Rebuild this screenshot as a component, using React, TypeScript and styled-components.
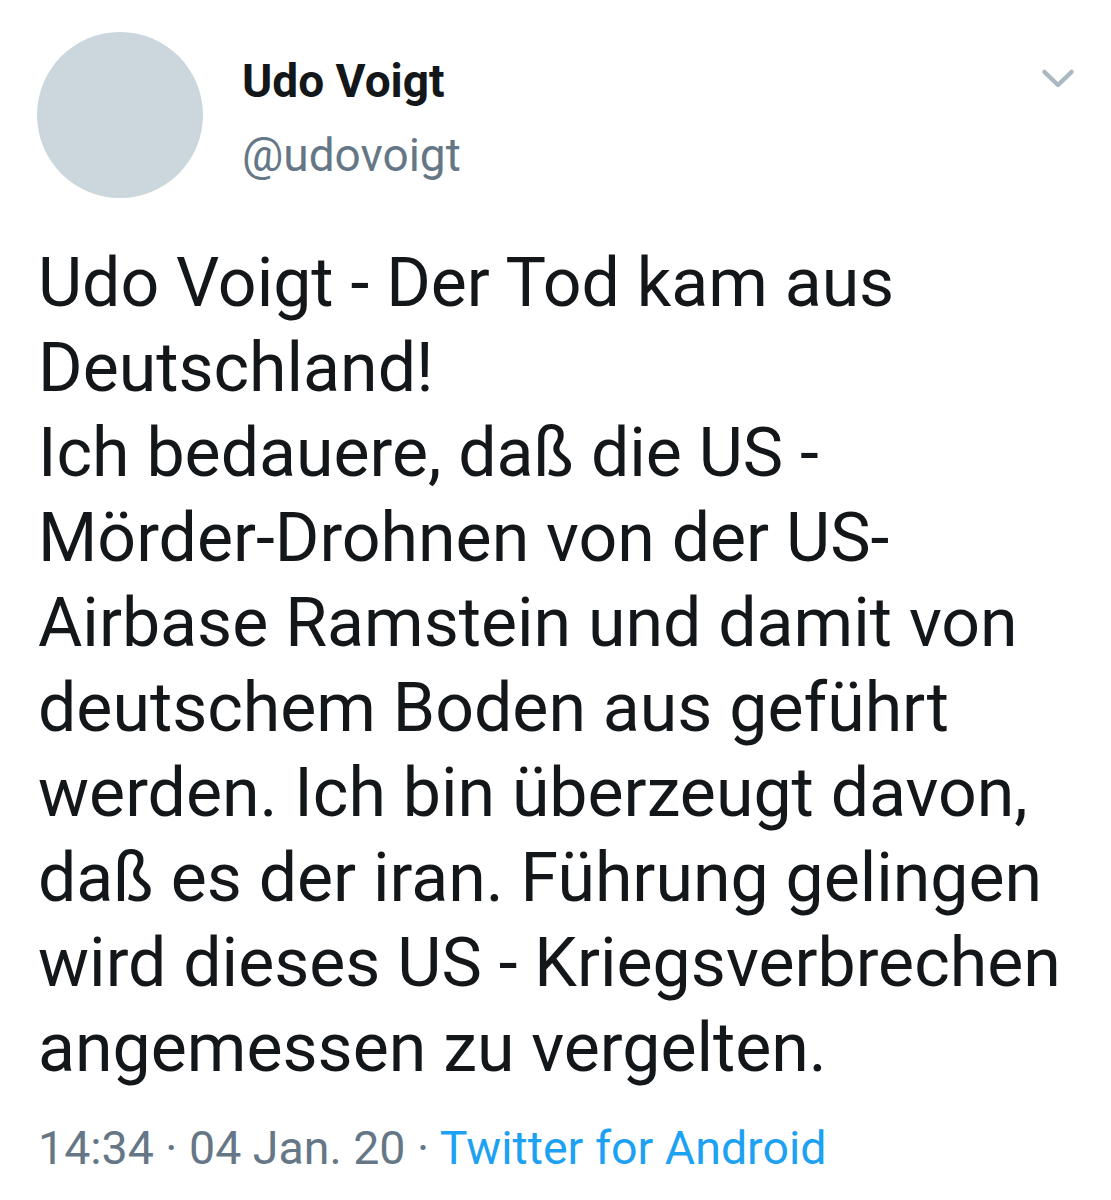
import styled, { createGlobalStyle } from "styled-components";

const GlobalStyle = createGlobalStyle`
  html, body {
    margin: 0;
    padding: 0;
    background: #fff;
  }
  body {
    font-family: Roboto, "Noto Sans", sans-serif;
    color: #14171a;
  }
`;

const tweetLines = [
  "Udo Voigt - Der Tod kam aus",
  "Deutschland!",
  "Ich bedauere, daß die US -",
  "Mörder-Drohnen von der US-",
  "Airbase Ramstein und damit von",
  "deutschem Boden aus geführt",
  "werden. Ich bin überzeugt davon,",
  "daß es der iran. Führung gelingen",
  "wird dieses US - Kriegsverbrechen",
  "angemessen zu vergelten.",
];

export default function App() {
  return (
    <>
      <GlobalStyle />
      <Tweet>
        <Header>
          <Avatar />
          <Names>
            <DisplayName>Udo Voigt</DisplayName>
            <Handle>@udovoigt</Handle>
          </Names>
          <MenuButton aria-label="Mehr">
            <svg width="34" height="22" viewBox="0 0 34 22">
              <path
                d="M3.5 4 L17 17 L30.5 4"
                fill="none"
                stroke="#aab8c2"
                strokeWidth="4.5"
                strokeLinecap="round"
                strokeLinejoin="round"
              />
            </svg>
          </MenuButton>
        </Header>
        <Body>
          {tweetLines.map((line) => (
            <Line key={line}>{line}</Line>
          ))}
        </Body>
        <Meta>
          14:34 · 04 Jan. 20 · <Source>Twitter for Android</Source>
        </Meta>
      </Tweet>
    </>
  );
}

const Tweet = styled.div`
  width: 1111px;
  height: 1200px;
  box-sizing: border-box;
  padding: 32px 0 0 38px;
  overflow: hidden;
`;

const Header = styled.div`
  display: flex;
  align-items: flex-start;
`;

const Avatar = styled.div`
  width: 166px;
  height: 166px;
  margin-left: -1px;
  border-radius: 50%;
  background: #ccd6dd;
  flex-shrink: 0;
`;

const Names = styled.div`
  display: flex;
  flex-direction: column;
  margin-left: 39px;
  padding-top: 19px;
  flex: 1;
`;

const DisplayName = styled.div`
  font-size: 46px;
  font-weight: 700;
  line-height: 60px;
  color: #14171a;
`;

const Handle = styled.div`
  font-size: 46px;
  line-height: 60px;
  margin-top: 14px;
  color: #657786;
`;

const MenuButton = styled.div`
  margin-top: 36px;
  margin-right: 36px;
  display: flex;
`;

const Body = styled.div`
  margin-top: 43px;
  font-size: 68px;
  line-height: 85px;
  color: #14171a;
`;

const Line = styled.div`
  white-space: nowrap;
`;

const Meta = styled.div`
  margin-top: 27px;
  font-size: 46.5px;
  line-height: 60px;
  color: #657786;
  white-space: nowrap;
`;

const Source = styled.span`
  color: #1da1f2;
`;
